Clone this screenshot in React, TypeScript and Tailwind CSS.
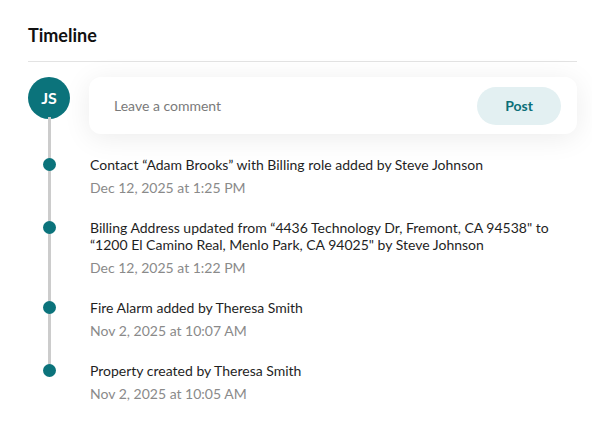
import React from 'react';

type Entry = {
  id: number;
  text: React.ReactNode;
  date: string;
};

const entries: Entry[] = [
  {
    id: 1,
    text: 'Contact “Adam Brooks” with Billing role added by Steve Johnson',
    date: 'Dec 12, 2025 at 1:25 PM',
  },
  {
    id: 2,
    text: 'Billing Address updated from “4436 Technology Dr, Fremont, CA 94538" to “1200 El Camino Real, Menlo Park, CA 94025" by Steve Johnson',
    date: 'Dec 12, 2025 at 1:22 PM',
  },
  {
    id: 3,
    text: 'Fire Alarm added by Theresa Smith',
    date: 'Nov 2, 2025 at 10:07 AM',
  },
  {
    id: 4,
    text: 'Property created by Theresa Smith',
    date: 'Nov 2, 2025 at 10:05 AM',
  },
];

function CommentBox() {
  return (
    <div className="flex items-start gap-[19px]">
      <div className="w-[42px] h-[42px] shrink-0 rounded-full bg-[#0b737b] flex items-center justify-center text-white text-[16px] font-bold">
        JS
      </div>
      <div className="flex-1 h-[57px] rounded-xl bg-white shadow-[0_4px_28px_rgba(0,0,0,0.08)] flex items-center justify-between pl-[25px] pr-[16px]">
        <span className="text-[14px] text-[#7a7a7a]">Leave a comment</span>
        <button className="w-[84px] h-[38px] rounded-full bg-[#e3f0f2] text-[#0b6f78] text-[14px] font-bold">
          Post
        </button>
      </div>
    </div>
  );
}

export default function App() {
  return (
    <div
      className="min-h-screen bg-white pl-[28px] pr-[15px] pt-[23px] text-[#1a1a1a]"
      style={{ fontFamily: 'Lato, "Liberation Sans", sans-serif' }}
    >
      <h2 className="text-[18px] leading-[24px] font-bold text-[#111]">Timeline</h2>
      <div className="mt-[14px] h-px bg-[#e3e3e3]" />

      <div className="relative mt-[15px]">
        <div className="absolute left-[20px] top-[40px] bottom-[36px] w-[3px] bg-[#cccccc]" />

        <CommentBox />

        <div className="mt-[22px] flex flex-col gap-[23px]">
          {entries.map((e) => (
            <div key={e.id} className="relative flex">
              <div className="w-[42px] shrink-0 relative">
                <div className="absolute left-[15px] top-[2px] w-[13px] h-[13px] rounded-full bg-[#0b737b]" />
              </div>
              <div className="ml-[20px] flex-1 min-w-0">
                <p className="text-[14px] leading-[17px] text-[#1f1f1f]">{e.text}</p>
                <p className="mt-[6px] text-[14px] leading-[17px] text-[#8a8a8a]">{e.date}</p>
              </div>
            </div>
          ))}
        </div>
      </div>
    </div>
  );
}
